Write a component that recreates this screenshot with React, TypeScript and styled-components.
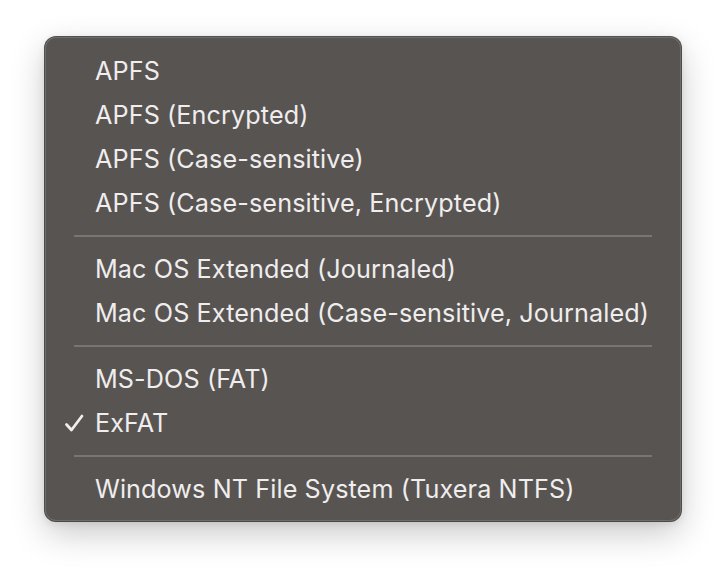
import React from "react";
import styled, { createGlobalStyle } from "styled-components";

const Global = createGlobalStyle`
  html, body { margin: 0; padding: 0; background: #ffffff; }
  body { font-family: Inter, "Noto Sans", sans-serif; }
`;

const Page = styled.div`
  width: 726px;
  height: 574px;
  padding: 37px 0 0 45px;
  box-sizing: border-box;
`;

const Menu = styled.div`
  width: 636px;
  box-sizing: border-box;
  padding: 12px 0 10px;
  background: #585452;
  border-radius: 11px;
  box-shadow: 0 0 0 1px rgba(30, 28, 28, 0.75),
    inset 0 0 0 1px rgba(255, 255, 255, 0.14),
    0 12px 34px rgba(0, 0, 0, 0.22), 0 2px 8px rgba(0, 0, 0, 0.1);
  display: flex;
  flex-direction: column;
`;

const Item = styled.div`
  height: 44px;
  display: flex;
  align-items: center;
  padding-left: 50px;
  position: relative;
  color: #efeded;
  font-size: 25.2px;
  font-weight: 400;
  letter-spacing: 0.1px;
  white-space: nowrap;
`;

const Check = styled.svg`
  position: absolute;
  left: 19px;
  top: 50%;
  transform: translateY(-50%);
`;

const Separator = styled.div`
  height: 22px;
  display: flex;
  align-items: center;
  padding: 0 29px;
  &::after {
    content: "";
    flex: 1;
    height: 2px;
    background: #7a7573;
  }
`;

type Entry = { label: string; checked?: boolean } | "sep";

const entries: Entry[] = [
  { label: "APFS" },
  { label: "APFS (Encrypted)" },
  { label: "APFS (Case-sensitive)" },
  { label: "APFS (Case-sensitive, Encrypted)" },
  "sep",
  { label: "Mac OS Extended (Journaled)" },
  { label: "Mac OS Extended (Case-sensitive, Journaled)" },
  "sep",
  { label: "MS-DOS (FAT)" },
  { label: "ExFAT", checked: true },
  "sep",
  { label: "Windows NT File System (Tuxera NTFS)" },
];

export default function App() {
  return (
    <>
      <Global />
      <Page>
        <Menu>
          {entries.map((e, i) =>
            e === "sep" ? (
              <Separator key={i} />
            ) : (
              <Item key={i}>
                {e.checked && (
                  <Check width="20" height="18" viewBox="0 0 20 18">
                    <path
                      d="M2.5 10.5 L7.5 16 L18 2"
                      fill="none"
                      stroke="#efeded"
                      strokeWidth="2.8"
                      strokeLinecap="round"
                      strokeLinejoin="round"
                    />
                  </Check>
                )}
                {e.label}
              </Item>
            )
          )}
        </Menu>
      </Page>
    </>
  );
}
